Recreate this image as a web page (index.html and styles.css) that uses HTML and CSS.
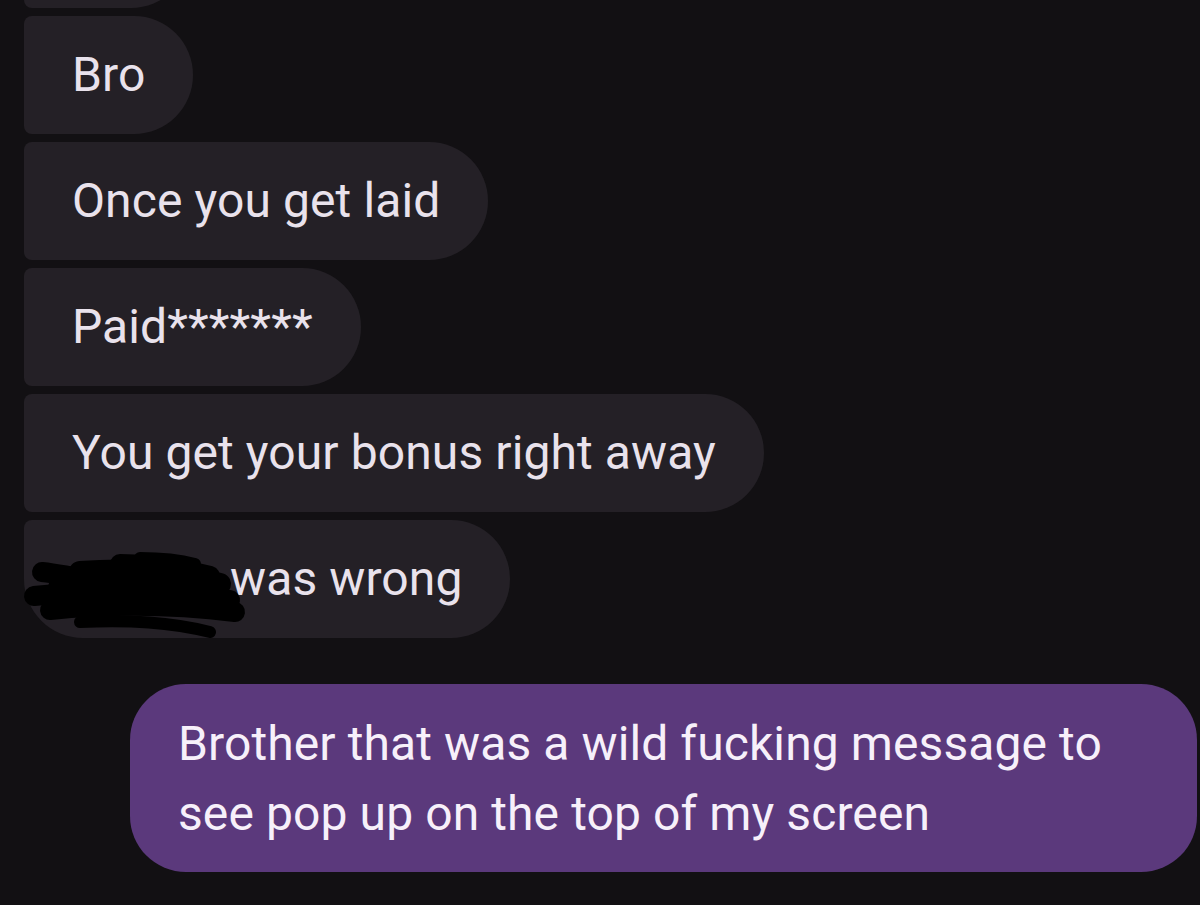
FILE: index.html
```html
<!DOCTYPE html>
<html lang="en">
<head>
<meta charset="utf-8">
<title>Messages</title>
<link rel="stylesheet" href="styles.css">
</head>
<body>
<main class="thread">
  <div class="group">
    <div class="bubble in prev"><span class="txt">Hey</span></div>
    <div class="bubble in"><span class="txt">Bro</span></div>
    <div class="bubble in"><span class="txt">Once you get laid</span></div>
    <div class="bubble in"><span class="txt">Paid*******</span></div>
    <div class="bubble in"><span class="txt">You get your bonus right away</span></div>
    <div class="bubble in last"><span class="redacted"></span><span class="txt">was wrong</span>
      <svg class="scribble" width="230" height="100" viewBox="0 0 230 100" aria-hidden="true">
        <g stroke="#000" stroke-linecap="round" stroke-linejoin="round" fill="none">
          <path d="M22 34 C40 36 60 40 80 44" stroke-width="20"/>
          <path d="M100 26 C130 26 160 30 190 38" stroke-width="20"/>
          <path d="M60 34 C110 30 160 34 200 46" stroke-width="22"/>
          <path d="M14 58 C70 52 140 50 210 62" stroke-width="20"/>
          <path d="M40 50 C90 46 150 48 195 56" stroke-width="24"/>
          <path d="M30 72 C90 66 150 66 215 74" stroke-width="20"/>
          <path d="M60 84 C110 82 150 84 190 94" stroke-width="12"/>
          <path d="M120 20 C140 20 160 22 175 26" stroke-width="12"/>
        </g>
      </svg>
    </div>
  </div>
  <div class="group out-group">
    <div class="bubble out"><span class="txt">Brother that was a wild fucking message to see pop up on the top of my screen</span></div>
  </div>
</main>
</body>
</html>
```
FILE: styles.css
```css
html, body {
  margin: 0;
  padding: 0;
  background: #121013;
  height: 100%;
  overflow: hidden;
}
.thread {
  display: flex;
  flex-direction: column;
  padding: 0 3px 0 24px;
  font-family: Roboto, "Liberation Sans", sans-serif;
}
.group {
  display: flex;
  flex-direction: column;
  align-items: flex-start;
  gap: 8px;
}
.bubble {
  position: relative;
  box-sizing: border-box;
  font-size: 48px;
  letter-spacing: 0.1px;
  line-height: 118px;
  height: 118px;
  padding: 0 48px;
  white-space: nowrap;
}
.in {
  background: #242026;
  color: #e9e2ec;
  border-radius: 8px 59px 59px 8px;
}
.prev {
  margin-top: -110px;
  width: 166px;
}
.prev .txt { visibility: hidden; }
.last {
  border-radius: 8px 59px 59px 59px;
}
.redacted {
  display: inline-block;
  width: 158px;
}
.scribble {
  position: absolute;
  left: -4px;
  top: 18px;
}
.out-group {
  align-items: flex-end;
  margin-top: 46px;
}
.out {
  background: #5b397c;
  color: #f7f0fa;
  border-radius: 56px;
  height: auto;
  width: 1067px;
  white-space: normal;
  line-height: 70px;
  padding: 25px 40px 23px 48px;
}
```
